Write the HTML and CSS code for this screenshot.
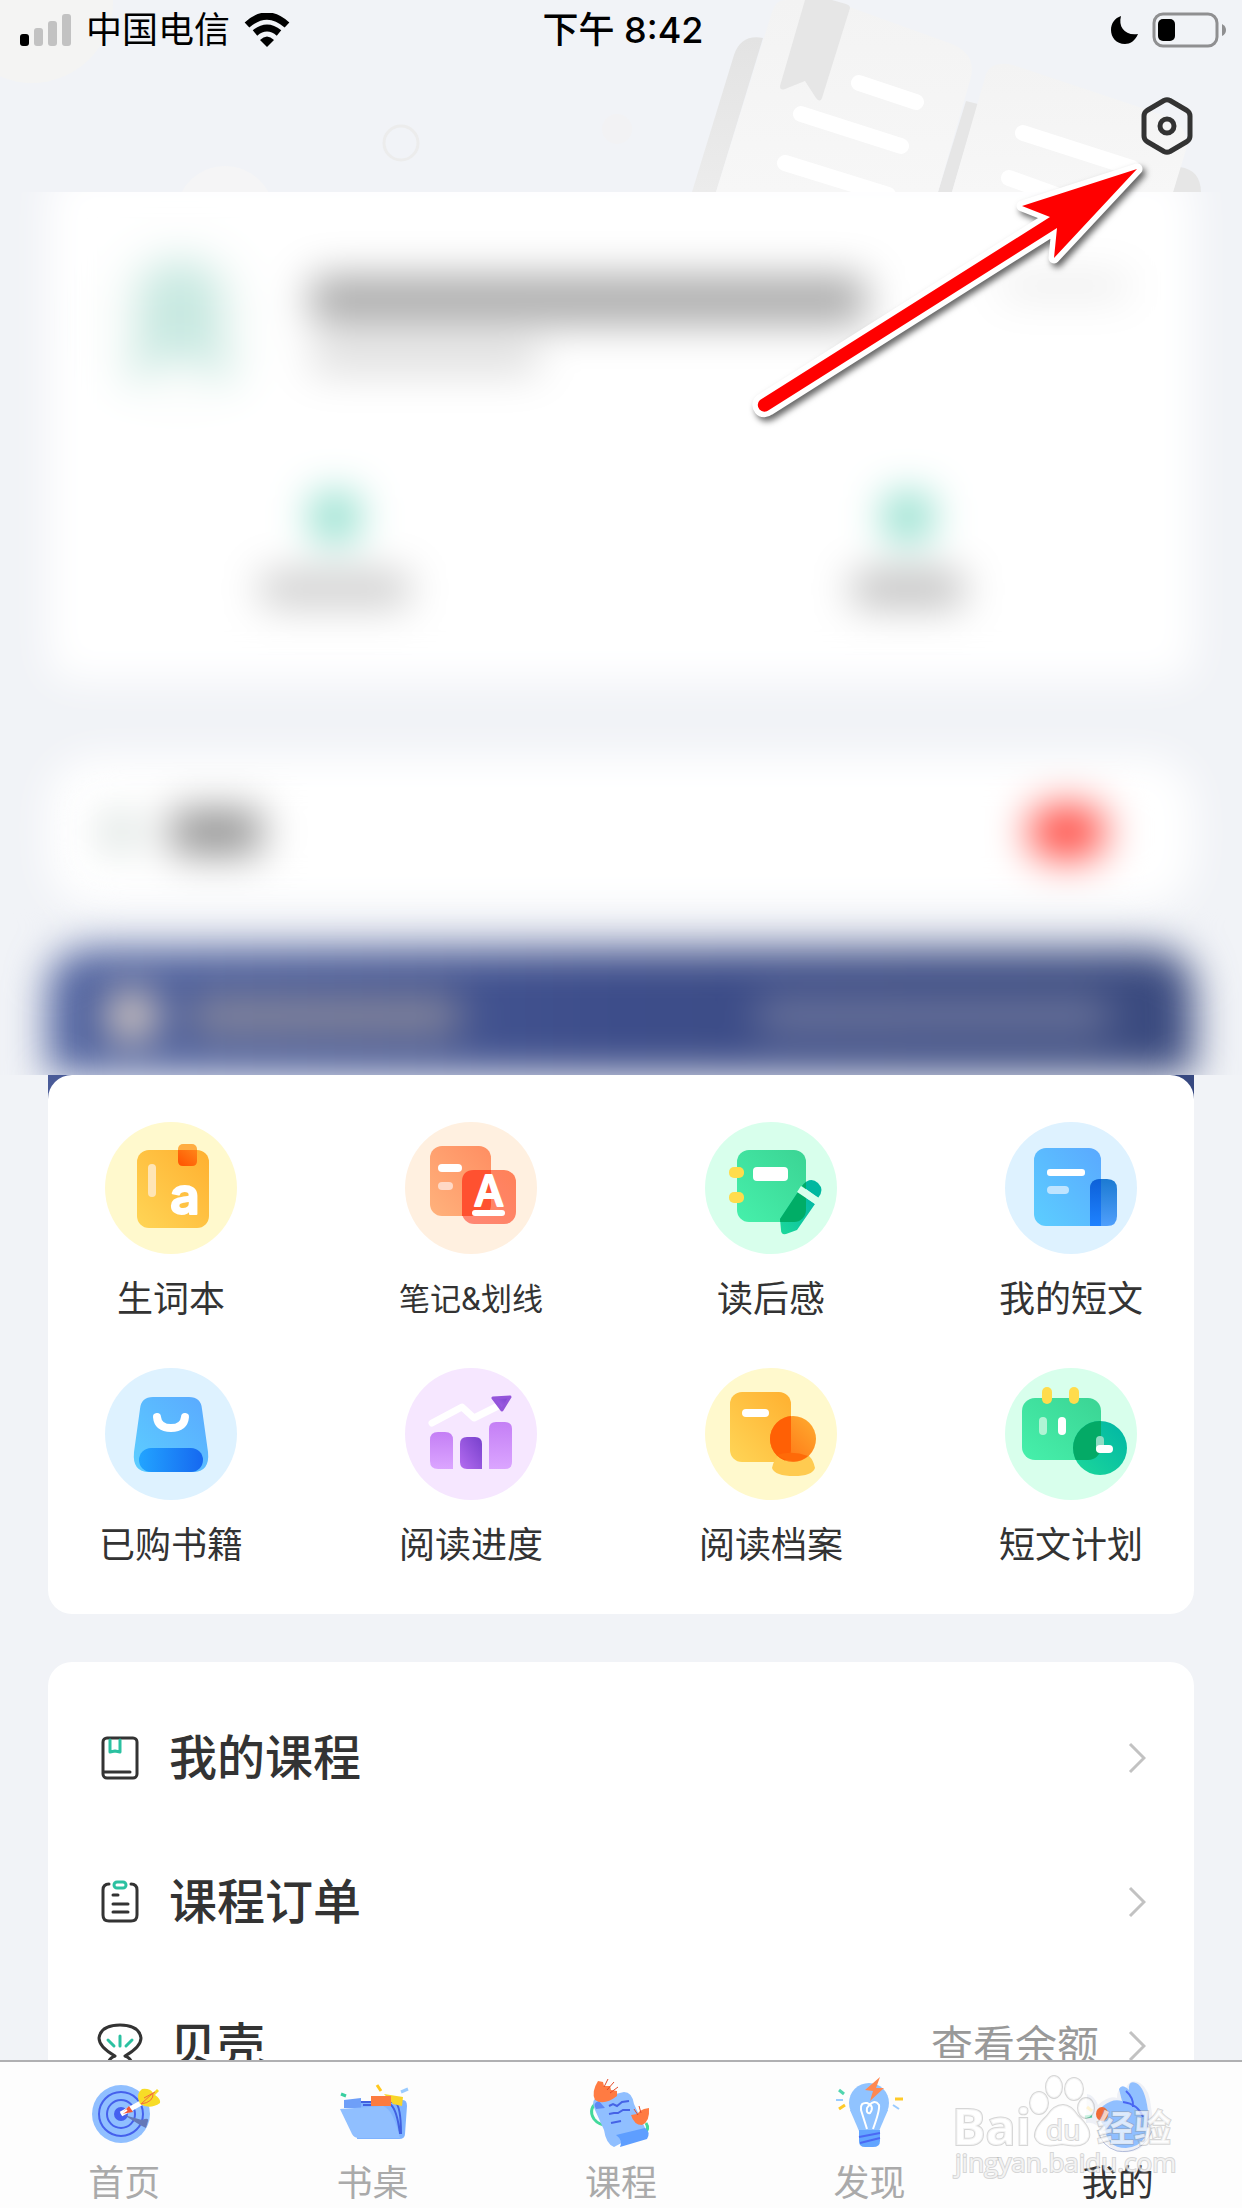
FILE: index.html
```
<!DOCTYPE html>
<html lang="zh-CN">
<head>
    <meta charset="UTF-8">
    <meta name="viewport" content="width=device-width, initial-scale=1.0">
    <title>我的</title>
    <link rel="stylesheet" href="styles.css">
</head>
<body>

<div class="app">
    <header class="header">
        <!-- book artwork behind the header -->
        <svg class="header-art" viewBox="0 0 1242 192" preserveAspectRatio="xMaxYMin slice" aria-hidden="true">
            <defs>
                <linearGradient id="cover" x1="0" y1="0" x2="0" y2="1"><stop offset="0" stop-color="#e3e3e3"/><stop offset="1" stop-color="#ececec"/></linearGradient>
                <linearGradient id="page" x1="0" y1="0" x2="0" y2="1"><stop offset="0" stop-color="#f3f3f3"/><stop offset="1" stop-color="#f7f7f7"/></linearGradient>
            </defs>
            <circle cx="32" cy="2" r="81" fill="#f4f4f3"/>
            <circle cx="225" cy="215" r="49" fill="#f5f5f6"/>
            <circle cx="401" cy="143" r="17" fill="none" stroke="#ececec" stroke-width="3"/>
            <circle cx="617" cy="129" r="15" fill="#f2f2f4"/>
            <path d="M692 192 L734 55 Q741 34 763 38 L716 192Z" fill="url(#cover)"/>
            <path d="M938 192 L966 101 L978 104 L952 192Z" fill="#e6e6e6"/>
            <path d="M716 192 L772 12 Q776 0 784 0 H830 L952 44 Q976 54 971 77 L938 192Z" fill="url(#page)"/>
            <path d="M1173 192 L1180 167 Q1201 170 1201 193Z" fill="#e6e6e6"/>
            <path d="M952 192 L986 74 Q992 60 1013 65 L1160 114 Q1192 126 1186 150 L1173 192Z" fill="url(#page)"/>
            <path d="M805 0 L780 86 Q780 91 785 89 L805 81 L816 98 Q820 103 822 98 L850 8 Q850 5 846 4 L832 0Z" fill="#e6e6e6"/>
            <path d="M859 83 L916 102 M801 114 L901 146 M785 163 L888 195 M1023 133 L1132 168 M1009 178 L1070 200" fill="none" stroke="#fff" stroke-width="16" stroke-linecap="round"/>
        </svg>

        <div class="status-bar">
            <div class="status-left">
                <svg width="52" height="34" viewBox="0 0 52 34" aria-hidden="true">
                    <rect x="0" y="21" width="9" height="12" rx="3"/>
                    <g fill="#c2c2c2"><rect x="14" y="15" width="9" height="18" rx="3"/><rect x="28" y="8" width="9" height="25" rx="3"/><rect x="42" y="1" width="9" height="32" rx="3"/></g>
                </svg>
                <span>中国电信</span>
                <svg width="46" height="34" viewBox="0 0 46 34" aria-hidden="true">
                    <path d="M3 12 Q23 -6 43 12" fill="none" stroke="#000" stroke-width="7"/>
                    <path d="M11 20 Q23 10 35 20" fill="none" stroke="#000" stroke-width="7"/>
                    <path d="M16 27 Q23 20 30 27 L23 34Z"/>
                </svg>
            </div>
            <time class="status-time">下午 8:42</time>
            <div class="status-right">
                <svg width="28" height="30" viewBox="0 0 28 30" aria-hidden="true"><path d="M11 1 C8 12 15 21 28 19 C25 26 20 29 15 29 C6 29 1 22 1 15 C1 8 5 3 11 1Z"/></svg>
                <svg width="74" height="36" viewBox="0 0 74 36" aria-hidden="true">
                    <rect x="2" y="2" width="63" height="32" rx="9" fill="none" stroke="#8f8f91" stroke-width="3"/>
                    <rect x="6" y="7" width="17" height="22" rx="5"/>
                    <path d="M70 12 Q74 14 74 18 Q74 22 70 24Z" fill="#8f8f91"/>
                </svg>
            </div>
        </div>

        <div class="toolbar">
            <button class="settings" type="button" aria-label="设置">
                <svg width="54" height="60" viewBox="0 0 54 60" fill="none" stroke="#333" stroke-linejoin="round" aria-hidden="true">
                    <path d="M24 4.500 Q27 3 30 4.500 L47 14.500 Q50 16.500 50 20 V40 Q50 43.500 47 45.500 L30 55.500 Q27 57 24 55.500 L7 45.500 Q4 43.500 4 40 V20 Q4 16.500 7 14.500Z" stroke-width="5"/>
                    <circle cx="27" cy="30" r="7" stroke-width="5"/>
                </svg>
            </button>
        </div>
    </header>

    <!-- private account details are blurred out -->
    <section class="private" aria-hidden="true">
        <div class="private-inner">
            <div class="p-card p-profile">
                <div class="p-user">
                    <svg class="p-avatar" width="120" height="128" viewBox="0 0 120 128">
                        <circle cx="60" cy="66" r="84" fill="#fafcfb"/>
                        <path d="M6 136 Q10 104 18 90 V40 Q22 6 60 6 Q98 6 102 40 V90 Q110 104 114 136 Q88 102 60 102 Q32 102 6 136Z" fill="#c8e9e1"/>
                    </svg>
                    <div class="p-names">
                        <i class="p-bar p-name"></i>
                        <i class="p-bar p-sub"></i>
                    </div>
                    <i class="p-bar p-note"></i>
                </div>
                <div class="p-stats">
                    <div class="p-stat"><i class="p-num"></i><i class="p-bar p-label"></i></div>
                    <div class="p-stat"><i class="p-num"></i><i class="p-bar p-label p-short"></i></div>
                </div>
            </div>
            <div class="p-card p-row">
                <i class="p-bar p-icon"></i>
                <i class="p-bar p-title"></i>
                <i class="p-bar p-badge"></i>
            </div>
            <div class="p-vip">
                <i class="p-bar p-crown"></i>
                <i class="p-bar p-vip-name"></i>
                <i class="p-bar p-vip-text"></i>
            </div>
            <div class="p-card p-next"></div>
        </div>
    </section>

    <main class="content">
        <div class="services-wrap">
            <nav class="card services">
                <a class="service" href="#words">
                    <svg viewBox="0 0 132 132" aria-hidden="true">
                        <defs>
                            <linearGradient id="yel" x1="0" y1="1" x2="1" y2="0"><stop offset="0" stop-color="#ffd556"/><stop offset="1" stop-color="#ffb030"/></linearGradient>
                            <linearGradient id="org" x1="0" y1="1" x2="1" y2="0"><stop offset="0" stop-color="#ff5200"/><stop offset="1" stop-color="#ff8418"/></linearGradient>
                        </defs>
                        <circle cx="66" cy="66" r="66" fill="#fff9cd"/>
                        <rect x="32" y="28" width="72" height="78" rx="12" fill="url(#yel)"/>
                        <rect x="73" y="22" width="19" height="22" rx="5" fill="#ffad42"/>
                        <path d="M73 28 H92 V39 Q92 44 87 44 H78 Q73 44 73 39Z" fill="url(#org)"/>
                        <rect x="43" y="42" width="8" height="33" rx="4" fill="#ffe5b5"/>
                        <text x="80" y="92" class="glyph glyph-a">a</text>
                    </svg>
                    <span>生词本</span>
                </a>
                <a class="service" href="#notes">
                    <svg viewBox="0 0 132 132" aria-hidden="true">
                        <defs>
                            <linearGradient id="pea" x1="0" y1="1" x2="1" y2="0"><stop offset="0" stop-color="#ffb27c"/><stop offset="1" stop-color="#ff8e62"/></linearGradient>
                            <linearGradient id="cor" x1="0" y1="1" x2="1" y2="0"><stop offset="0" stop-color="#ff8877"/><stop offset="1" stop-color="#ff8158"/></linearGradient>
                        </defs>
                        <circle cx="66" cy="66" r="66" fill="#fff0e0"/>
                        <rect x="25" y="24" width="61" height="70" rx="12" fill="url(#pea)"/>
                        <rect x="57" y="48" width="54" height="54" rx="12" fill="url(#cor)"/>
                        <path d="M57 94 V60 Q57 48 69 48 H86 V82 Q86 94 74 94Z" fill="#ff5130"/>
                        <rect x="33" y="42" width="24" height="8" rx="4" fill="#fff"/>
                        <rect x="33" y="60" width="15" height="8" rx="4" fill="#ffd9c6"/>
                        <text x="84" y="84" class="glyph glyph-cap">A</text>
                        <rect x="67" y="88" width="33" height="6" rx="3" fill="#fff"/>
                    </svg>
                    <span class="long">笔记&amp;划线</span>
                </a>
                <a class="service" href="#reviews">
                    <svg viewBox="0 0 132 132" aria-hidden="true">
                        <defs>
                            <linearGradient id="grn" x1="0" y1="1" x2="1" y2="0"><stop offset="0" stop-color="#46f0ab"/><stop offset="1" stop-color="#3bd494"/></linearGradient>
                            <linearGradient id="tea" x1="0" y1="1" x2="1" y2="0"><stop offset="0" stop-color="#1dd99a"/><stop offset="1" stop-color="#00b5a5"/></linearGradient>
                        </defs>
                        <clipPath id="note-clip"><rect x="32" y="28" width="69" height="72" rx="12"/></clipPath>
                        <circle cx="66" cy="66" r="66" fill="#d8ffec"/>
                        <rect x="32" y="28" width="69" height="72" rx="12" fill="url(#grn)"/>
                        <rect x="24" y="45" width="15" height="11" rx="5" fill="#ffdc4c"/>
                        <rect x="24" y="70" width="15" height="11" rx="5" fill="#ffdc4c"/>
                        <rect x="48" y="45" width="35" height="14" rx="4" fill="#fff"/>
                        <path d="M97 64 Q105 54 113 61 Q120 68 113 76Z" fill="#00b8a0"/>
                        <path d="M93 70 L110 82 L92 108 L81 112 Q76 113 76 108 L75 97Z" fill="url(#tea)"/>
                        <path d="M97 64 Q105 54 113 61 Q120 68 113 76ZM93 70 L110 82 L92 108 L76 112 L75 97Z" fill="#00ad66" clip-path="url(#note-clip)"/>
                        <path d="M94 67 L112 79" stroke="#d8ffec" stroke-width="7"/>
                    </svg>
                    <span>读后感</span>
                </a>
                <a class="service" href="#essays">
                    <svg viewBox="0 0 132 132" aria-hidden="true">
                        <defs>
                            <linearGradient id="sky" x1="0" y1="1" x2="1" y2="0"><stop offset="0" stop-color="#5cceff"/><stop offset="1" stop-color="#5aa9ff"/></linearGradient>
                            <linearGradient id="blu" x1="0" y1="0" x2="0" y2="1"><stop offset="0" stop-color="#1c7ad2"/><stop offset="1" stop-color="#4f9ffc"/></linearGradient>
                            <linearGradient id="dee" x1="0" y1="0" x2="0" y2="1"><stop offset="0" stop-color="#0d60d8"/><stop offset="1" stop-color="#1e82ff"/></linearGradient>
                        </defs>
                        <circle cx="66" cy="66" r="66" fill="#def2ff"/>
                        <rect x="29" y="26" width="67" height="78" rx="12" fill="url(#sky)"/>
                        <path d="M85 104 V67 Q85 57 95 57 H102 Q112 57 112 67 V94 Q112 104 102 104Z" fill="url(#blu)"/>
                        <path d="M85 104 V67 Q85 57 96 57 V104Z" fill="url(#dee)"/>
                        <rect x="42" y="47" width="38" height="7" rx="3" fill="#fff"/>
                        <rect x="42" y="64" width="22" height="8" rx="4" fill="#bfe4ff"/>
                    </svg>
                    <span>我的短文</span>
                </a>
                <a class="service" href="#books">
                    <svg viewBox="0 0 132 132" aria-hidden="true">
                        <defs><linearGradient id="bag" x1="0" y1="0" x2="1" y2="0"><stop offset="0" stop-color="#22a4ff"/><stop offset="1" stop-color="#1668f0"/></linearGradient></defs>
                        <circle cx="66" cy="66" r="66" fill="#def2ff"/>
                        <path d="M48 29 H84 Q96 29 97 41 L103 84 Q105 104 88 104 H44 Q27 104 29 84 L35 41 Q36 29 48 29Z" fill="url(#sky)"/>
                        <rect x="34" y="80" width="64" height="24" rx="12" fill="url(#bag)"/>
                        <path d="M52 49 Q53 60 66 60 Q79 60 80 49" fill="none" stroke="#fff" stroke-width="8" stroke-linecap="round"/>
                    </svg>
                    <span>已购书籍</span>
                </a>
                <a class="service" href="#progress">
                    <svg viewBox="0 0 132 132" aria-hidden="true">
                        <defs>
                            <linearGradient id="lil" x1="0" y1="0" x2="0" y2="1"><stop offset="0" stop-color="#c47ff5"/><stop offset="1" stop-color="#dba5ff"/></linearGradient>
                            <linearGradient id="pur" x1="1" y1="0" x2="0" y2="1"><stop offset="0" stop-color="#7740cc"/><stop offset="1" stop-color="#b46cf0"/></linearGradient>
                        </defs>
                        <circle cx="66" cy="66" r="66" fill="#f6e7ff"/>
                        <path d="M33 64 H40 Q48 64 48 72 V101 H33 Q25 101 25 93 V72 Q25 64 33 64Z" fill="url(#lil)"/>
                        <path d="M62 69 H70 Q77 69 77 76 V101 H62 Q55 101 55 94 V76 Q55 69 62 69Z" fill="url(#pur)"/>
                        <path d="M91 54 H100 Q107 54 107 61 V94 Q107 101 100 101 H84 V61 Q84 54 91 54Z" fill="url(#lil)"/>
                        <path d="M27 55 L57 39 L69 50 L93 38" fill="none" stroke="#fff" stroke-width="7" stroke-linecap="round" stroke-linejoin="round"/>
                        <path d="M88 30 L105 29 L97 42Z" fill="url(#pur)" stroke="#9455da" stroke-width="3" stroke-linejoin="round"/>
                    </svg>
                    <span>阅读进度</span>
                </a>
                <a class="service" href="#archive">
                    <svg viewBox="0 0 132 132" aria-hidden="true">
                        <defs>
                            <clipPath id="file-clip"><rect x="25" y="24" width="61" height="70" rx="12"/></clipPath>
                            <linearGradient id="sun" x1="0" y1="1" x2="1" y2="0"><stop offset="0" stop-color="#ff6a10"/><stop offset="1" stop-color="#ffae30"/></linearGradient>
                        </defs>
                        <circle cx="66" cy="66" r="66" fill="#fff9cd"/>
                        <rect x="25" y="24" width="61" height="70" rx="12" fill="url(#yel)"/>
                        <path d="M67 100 Q70 85 83 85 H95 Q107 85 110 100 Q107 108 89 108 Q70 108 67 100Z" fill="#ffcb50"/>
                        <circle cx="88" cy="71" r="23" fill="url(#sun)"/>
                        <circle cx="88" cy="71" r="23" fill="#ff6005" clip-path="url(#file-clip)"/>
                        <path d="M72 87 Q87 82 103 88 Q90 99 72 87Z" fill="#ff6a08"/>
                        <rect x="37" y="41" width="27" height="8" rx="4" fill="#fff"/>
                    </svg>
                    <span>阅读档案</span>
                </a>
                <a class="service" href="#plan">
                    <svg viewBox="0 0 132 132" aria-hidden="true">
                        <clipPath id="cal-clip"><rect x="17" y="30" width="79" height="62" rx="13"/></clipPath>
                        <circle cx="66" cy="66" r="66" fill="#d8ffec"/>
                        <rect x="17" y="30" width="79" height="62" rx="13" fill="url(#grn)"/>
                        <rect x="37" y="19" width="10" height="17" rx="5" fill="#ffdc4c"/>
                        <rect x="64" y="19" width="10" height="17" rx="5" fill="#ffdc4c"/>
                        <rect x="34" y="49" width="8" height="18" rx="4" fill="#b0f4d4"/>
                        <rect x="53" y="49" width="8" height="18" rx="4" fill="#fff"/>
                        <circle cx="95" cy="80" r="27" fill="url(#tea)"/>
                        <circle cx="95" cy="80" r="27" fill="#04aa66" clip-path="url(#cal-clip)"/>
                        <rect x="91" y="68" width="8" height="16" rx="4" fill="#90dcc4"/>
                        <rect x="91" y="77" width="17" height="8" rx="4" fill="#fff"/>
                    </svg>
                    <span>短文计划</span>
                </a>
            </nav>
        </div>

        <nav class="card list">
            <a class="list-row" href="#courses">
                <svg class="row-icon" viewBox="0 0 48 48" fill="none" stroke="#333" stroke-width="3" stroke-linecap="round" stroke-linejoin="round" aria-hidden="true">
                    <rect x="7" y="4" width="34" height="40" rx="4"/><path d="M8 38 H34"/>
                    <path d="M14 6 V18 L19 17 L24 18 V6" stroke="#2bc1a1"/>
                </svg>
                <span class="row-title">我的课程</span>
                <svg class="chevron" viewBox="0 0 18 32" aria-hidden="true"><path d="M2 2 L16 16 L2 30"/></svg>
            </a>
            <a class="list-row" href="#orders">
                <svg class="row-icon" viewBox="0 0 48 48" fill="none" stroke="#333" stroke-width="3" stroke-linecap="round" stroke-linejoin="round" aria-hidden="true">
                    <path d="M13 6 Q7 6 7 12 V37 Q7 43 13 43 H35 Q41 43 41 37 V12 Q41 6 35 6 M17 17 H22 M17 26 H32 M17 34 H32"/>
                    <rect x="18" y="4" width="12" height="6" rx="3" stroke="#2bc1a1"/>
                </svg>
                <span class="row-title">课程订单</span>
                <svg class="chevron" viewBox="0 0 18 32" aria-hidden="true"><path d="M2 2 L16 16 L2 30"/></svg>
            </a>
            <a class="list-row" href="#shells">
                <svg class="row-icon" viewBox="0 0 48 48" fill="none" stroke="#333" stroke-width="3" stroke-linecap="round" stroke-linejoin="round" aria-hidden="true">
                    <path d="M19 34 Q3 25 3 16 Q5 3 24 3 Q43 3 45 16 Q45 25 29 34 Q35 36 36 42 M19 34 Q13 36 12 42"/>
                    <path d="M24 14 V24 M12 18 L18 24 M36 18 L30 24" stroke="#2bc1a1"/>
                </svg>
                <span class="row-title">贝壳</span>
                <span class="row-extra">查看余额</span>
                <svg class="chevron" viewBox="0 0 18 32" aria-hidden="true"><path d="M2 2 L16 16 L2 30"/></svg>
            </a>
        </nav>
    </main>

    <nav class="tabs">
        <a class="tab" href="#home">
            <svg viewBox="0 0 72 72" aria-hidden="true">
                <circle cx="33" cy="36" r="29" fill="#90bfff"/>
                <g fill="none" stroke="#4560ec" stroke-width="2"><circle cx="33" cy="36" r="22"/><circle cx="33" cy="36" r="14"/></g>
                <circle cx="33" cy="36" r="7" fill="#4560f0"/>
                <path d="M36 37 L54 42 Q61 39 60 43 L58 50 L52 47Z" fill="#6478b8"/>
                <path d="M33 36 L53 25" stroke="#fff" stroke-width="5"/>
                <path d="M33 36 L41 28 L45 34Z" fill="#f0563a"/><path d="M33 36 L39 32" stroke="#fff" stroke-width="2"/>
                <path d="M52 26 Q47 16 54 11 Q62 10 65 15 L69 11 L71 13 L67 17 Q73 21 72 25 Q62 32 52 26Z" fill="#f7dc27"/>
                <path d="M53 26 L65 15 Q66 24 53 26 M56 20 L67 14" fill="none" stroke="#f46b3c" stroke-width="1"/>
            </svg>
            <span>首页</span>
        </a>
        <a class="tab" href="#desk">
            <svg viewBox="0 0 72 72" aria-hidden="true">
                <path d="M22 24 L66 22 Q70 22 70 28 L68 56 Q68 61 62 61 H20Z" fill="#7fb3ff"/>
                <path d="M24 24 H58 Q64 28 64 56 M26 27 H54 Q60 32 63 56" fill="none" stroke="#4160e0" stroke-width="2"/>
                <path d="M47 16 L66 19 L65 28 L56 26Z" fill="#f8d529"/>
                <rect x="34" y="18" width="20" height="10" fill="#fc7b40"/>
                <path d="M7 22 L24 20 V30 H7Z" fill="#6e9ff8"/>
                <path d="M3 31 L46 28 Q56 31 63 60 H22 Q17 60 15 56Z" fill="#90bfff"/>
                <path d="M4 16 L9 18" stroke="#38cfa0" stroke-width="3"/><path d="M40 7 L44 13" stroke="#ffc81e" stroke-width="3"/><path d="M64 14 L71 11" stroke="#9acbff" stroke-width="3"/>
            </svg>
            <span>书桌</span>
        </a>
        <a class="tab" href="#lessons">
            <!-- flowers wrapped round a paper scroll -->
            <svg viewBox="5 0 72 72" aria-hidden="true">
                <path d="M20 22 Q7 30 14 41 Q19 48 31 48 M66 45 Q70 51 64 56" fill="none" stroke="#43d99b" stroke-width="3"/>
                <path d="M15 32 Q10 20 19 20 L44 14 Q52 14 54 26 L66 52 L34 69 Q26 66 24 52Z" fill="#90bfff"/>
                <path d="M16 31 Q12 25 19 23 L25 30Z" fill="#5e87f4"/>
                <path d="M36 57 L65 50 Q71 54 67 61 L40 69 Q43 62 36 57Z" fill="#5e9eff"/>
                <path d="M29 28 L33 26 L37 28 L42 24 L49 23 M29 36 L34 35 L38 35 L43 32 L50 32 M31 45 L36 44 L41 43" fill="none" stroke="#4563e6" stroke-width="2"/>
                <path d="M18 3 Q11 14 15 22 Q24 28 37 18 L37 13 L31 12 L30 8 L24 8 L23 4Z" fill="#ff7b42"/>
                <path d="M24 9 L28 1 M27 12 L34 4 M30 15 L38 9" stroke="#e34a28" stroke-width="1"/>
                <path d="M51 37 Q54 47 62 47 Q70 44 69 30 L64 31 L60 33 L57 36Z" fill="#ff7b42"/>
                <path d="M58 37 L54 31 M61 35 L59 28" stroke="#e34a28" stroke-width="1"/>
            </svg>
            <span>课程</span>
        </a>
        <a class="tab" href="#discover">
            <svg viewBox="-3 0 72 72" aria-hidden="true">
                <circle cx="33" cy="25" r="20" fill="#90c3ff"/>
                <path d="M14 32 L23 53 H43 L52 32Z" fill="#90c3ff"/>
                <path d="M23 52 H44 V63 Q44 69 37 69 H29 Q23 69 23 63Z" fill="#62a5ff"/>
                <path d="M23 59 L44 55 M24 65 L44 60" stroke="#4b69f4" stroke-width="2"/>
                <path d="M31 51 L25 32 Q24 24 31 25 Q39 28 34 35 Q30 36 31 30 Q38 20 43 27 Q44 32 37 51" fill="none" stroke="#fff" stroke-width="2"/>
                <path d="M44 -1 L29 12 L37 13 L34 23 L48 10 L40 10Z" fill="#ff8851"/>
                <path d="M3 12 L8 16" stroke="#50d5ae" stroke-width="3"/><path d="M0 22 H7" stroke="#9acbff" stroke-width="2"/><path d="M3 31 L9 27 M59 21 H67" stroke="#ffca28" stroke-width="3"/><path d="M57 27 L63 31" stroke="#9acbff" stroke-width="2"/>
            </svg>
            <span>发现</span>
        </a>
        <a class="tab active" href="#me">
            <svg viewBox="0 0 72 72" aria-hidden="true">
                <path d="M5 16 Q12 17 16 27 Q27 17 35 20 Q35 8 44 10 Q48 0 58 5 Q68 12 69 29 Q72 43 69 57 Q60 76 41 74 Q25 72 20 55 Q15 43 4 45Z" fill="#eef0f6"/>
                <path d="M16 52 Q19 68 35 73 Q59 77 70 53" fill="none" stroke="#b1bbd9" stroke-width="1"/>
                <path d="M21 28 Q31 20 40 23 L37 11 Q40 5 47 12 Q46 2 54 5 Q63 9 66 33 Q70 68 44 70 Q24 70 23 49Q16 42 18 31Z" fill="#90bfff"/>
                <path d="M44 13 Q52 20 51 29 M41 24 Q56 26 61 39" fill="none" stroke="#4966f2" stroke-width="2"/>
                <ellipse cx="20" cy="36" rx="6" ry="7" fill="#f16b35"/>
                <path d="M5 29 L10 33" stroke="#ffd96c" stroke-width="3"/><path d="M3 39 L10 38" stroke="#46d69d" stroke-width="3"/>
            </svg>
            <span>我的</span>
        </a>
    </nav>

    <!-- pointer to the settings button -->
    <svg class="arrow" width="420" height="280" viewBox="740 150 420 280" aria-hidden="true">
        <path d="M760 400 L1050 217 L1022 206 L1137 169 L1054 258 L1057 228 L769 410 A6 6 0 0 1 760 400Z"/>
    </svg>

    <svg class="watermark" width="232" height="120" viewBox="0 0 232 120" aria-hidden="true">
        <g>
            <ellipse cx="89" cy="37" rx="9" ry="11"/>
            <ellipse cx="104" cy="21" rx="8" ry="11"/>
            <ellipse cx="124" cy="23" rx="9" ry="11"/>
            <ellipse cx="136" cy="42" rx="8" ry="10"/>
            <path d="M113 39 Q121 39 128 50 Q141 62 139 71 Q136 83 112 78 Q89 83 85 71 Q84 62 97 50 Q104 39 113 39Z"/>
        </g>
        <text x="2" y="79" font-size="50" font-weight="700">Bai</text>
        <text x="96" y="74" font-size="28">du</text>
        <text x="147" y="76" font-size="37" font-weight="700">经验</text>
        <text x="5" y="106" font-size="26">jingyan.baidu.com</text>
    </svg>
</div>

</body>
</html>
```
FILE: styles.css
```
* {
    box-sizing: border-box;
}
body {
    margin: 0;
    background: #f1f3f7;
    color: #333;
    font-family: Inter, "Noto Sans CJK SC", sans-serif;
}
a {
    color: inherit;
    text-decoration: none;
}
svg {
    display: block;
    flex: none;
}
.app {
    position: relative;
    display: flex;
    flex-direction: column;
    height: 100vh;
    overflow: hidden;
}

/* header */
.header {
    position: relative;
    flex: none;
}
.header-art {
    position: absolute;
    top: 0;
    left: 0;
    width: 100%;
    height: 100%;
}
.status-bar {
    position: relative;
    display: grid;
    grid-template-columns: 1fr auto 1fr;
    align-items: center;
    height: 60px;
    padding: 0 16px 0 20px;
    color: #000;
    font-size: 36px;
    line-height: 60px;
}
.status-left,
.status-right {
    display: flex;
    align-items: center;
    gap: 14px;
}
.status-right {
    justify-content: flex-end;
}
.status-time {
    font-weight: 500;
}
.toolbar {
    position: relative;
    display: flex;
    justify-content: flex-end;
    align-items: center;
    height: 132px;
    padding: 0 48px;
}
.settings {
    padding: 0;
    border: none;
    background: none;
    cursor: pointer;
}

/* blurred account block */
.private {
    flex: none;
    overflow: hidden;
}
.private-inner {
    margin: -24px 0 -60px;
    padding: 0 48px;
    filter: blur(20px);
}
.p-card {
    background: #fff;
    border-radius: 24px;
}
.p-bar,
.p-num {
    display: block;
    border-radius: 12px;
}
.p-profile {
    padding: 88px 64px 75px 72px;
}
.p-user {
    display: flex;
    align-items: flex-start;
    height: 237px;
}
.p-avatar {
    overflow: visible;
}
.p-names {
    flex: 1;
    padding: 20px 0 0 70px;
}
.p-name {
    width: 556px;
    height: 48px;
    background: #a8a8a8;
}
.p-sub {
    width: 230px;
    height: 28px;
    margin-top: 20px;
    background: #d8d8d8;
}
.p-note {
    width: 130px;
    height: 24px;
    margin-top: 18px;
    background: #ebebeb;
}
.p-stats {
    display: grid;
    grid-template-columns: 1fr 1fr;
    margin: 0 -64px 0 -72px;
}
.p-stat {
    display: flex;
    flex-direction: column;
    align-items: center;
    gap: 31px;
}
.p-num {
    width: 48px;
    height: 48px;
    background: #8addca;
}
.p-label {
    width: 150px;
    height: 34px;
    background: #cacaca;
}
.p-short {
    width: 112px;
    background: #bababa;
}
.p-row {
    display: flex;
    align-items: center;
    height: 150px;
    margin-top: 76px;
    padding: 0 88px 0 54px;
    border-radius: 48px;
}
.p-icon {
    width: 36px;
    height: 36px;
    background: #d2dbd8;
}
.p-title {
    width: 92px;
    height: 46px;
    margin-left: 32px;
    background: #929292;
}
.p-badge {
    width: 78px;
    height: 54px;
    margin-left: auto;
    border-radius: 27px;
    background: #ff4a42;
}
.p-vip {
    display: flex;
    align-items: center;
    height: 126px;
    margin-top: 42px;
    padding: 8px 84px 0 60px;
    border-radius: 40px 40px 0 0;
    background: linear-gradient(90deg, #4f629f, #3d4d8a 50%, #3a4a7e);
}
.p-crown {
    width: 48px;
    height: 48px;
    background: #e0d2c5;
}
.p-vip-name {
    width: 270px;
    height: 38px;
    margin-left: 34px;
    background: #8a8a9c;
}
.p-vip-text {
    width: 354px;
    height: 32px;
    margin-left: auto;
    background: #727a9e;
}
.p-next {
    height: 60px;
    border-radius: 24px;
}

/* cards */
.content {
    flex: 1;
    min-height: 0;
    padding: 0 48px;
    overflow: hidden;
}
.card {
    background: #fff;
    border-radius: 24px;
}
.services-wrap {
    border-radius: 0 0 24px 24px;
    background: linear-gradient(90deg, #4a5b98, #364880) no-repeat top / 100% 24px;
}
.services {
    display: grid;
    grid-template-columns: repeat(4, 144px);
    justify-content: space-between;
    row-gap: 42px;
    padding: 47px 51px 42px;
}
.service {
    display: flex;
    flex-direction: column;
    align-items: center;
    gap: 18px;
    font-size: 36px;
    line-height: 54px;
    white-space: nowrap;
}
.service svg {
    width: 132px;
    height: 132px;
}
.service .long {
    font-size: 31px;
}
.glyph {
    fill: #fff;
    stroke: #fff;
    stroke-linejoin: round;
    font-family: Inter, sans-serif;
    text-anchor: middle;
}
.glyph-a {
    font-size: 52px;
    font-weight: 600;
    stroke-width: 2px;
}
.glyph-cap {
    font-size: 42px;
    font-weight: 500;
    stroke-width: 2px;
}
.list {
    margin-top: 48px;
    padding: 24px 48px;
}
.list-row {
    display: flex;
    align-items: center;
    height: 144px;
}
.row-icon {
    width: 48px;
    height: 48px;
}
.row-title,
.row-extra {
    padding-bottom: 8px;
}
.row-title {
    margin-left: 25px;
    font-size: 48px;
    font-weight: 500;
}
.row-extra {
    margin-left: auto;
    margin-right: 29px;
    color: #999;
    font-size: 42px;
}
.chevron {
    width: 18px;
    height: 32px;
    margin-left: auto;
    fill: none;
    stroke: #c2c2c2;
    stroke-width: 3px;
}
.row-extra + .chevron {
    margin-left: 0;
}

/* bottom tabs */
.tabs {
    display: grid;
    grid-template-columns: repeat(5, 1fr);
    flex: none;
    height: 148px;
    border-top: 2px solid #b0b0b2;
    background: #fdfdfd;
}
.tab {
    display: flex;
    flex-direction: column;
    align-items: center;
    padding-top: 16px;
    color: #aaa;
    font-size: 36px;
    line-height: 54px;
}
.tab svg {
    width: 72px;
    height: 72px;
    margin-bottom: 6px;
    overflow: visible;
}
.tab.active {
    color: #333;
}

/* overlays */
.arrow {
    position: absolute;
    top: 150px;
    right: 82px;
    overflow: visible;
    fill: #f00;
    stroke: #fff;
    stroke-width: 11px;
    stroke-linejoin: round;
    paint-order: stroke;
    filter: drop-shadow(3px 4px 3px rgba(0, 0, 0, 0.6));
    pointer-events: none;
}
.watermark {
    position: absolute;
    right: 60px;
    bottom: 22px;
    overflow: visible;
    fill: rgba(255, 255, 255, 0.7);
    stroke: rgba(140, 140, 140, 0.35);
    stroke-width: 2px;
    paint-order: stroke;
    font-family: "Open Sans", "Noto Sans CJK SC", sans-serif;
    pointer-events: none;
}
```
